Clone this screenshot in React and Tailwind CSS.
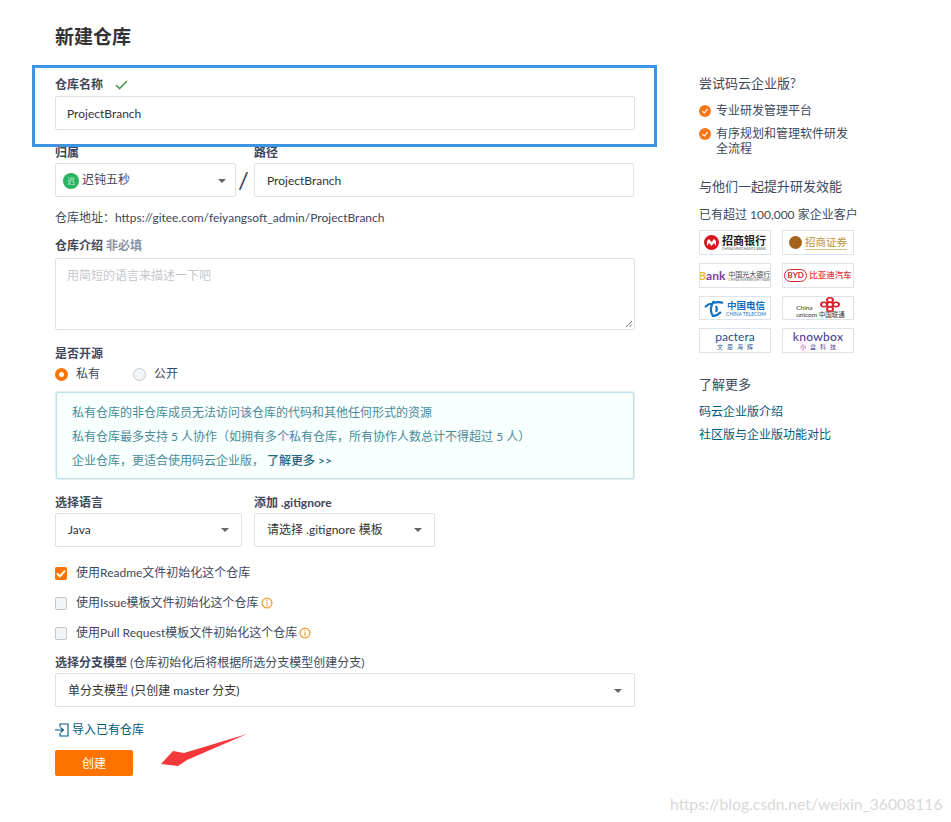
import React from 'react';

const FONT = 'font-["Lato","Noto_Sans_CJK_SC",sans-serif]';

// 下拉箭头
const Caret = () => (
    <span className="w-0 h-0 border-x-[4px] border-x-transparent border-t-[4px] border-t-[#666]" />
);

const Label = ({ children, className = '' }) => (
    <div className={`text-[12px] leading-[16px] font-bold text-[#40485b] ${className}`}>{children}</div>
);

const Select = ({ className = '', children }) => (
    <div className={`h-[34px] bg-white border border-[#dfe1e8] rounded-[2px] flex items-center justify-between text-[12px] text-[#333] ${className}`}>
        <span className="flex items-center">{children}</span>
        <Caret />
    </div>
);

const InfoIcon = () => (
    <svg width="12" height="12" viewBox="0 0 12 12" className="ml-[2px]">
        <circle cx="6" cy="6" r="4.8" fill="none" stroke="#f3a54c" strokeWidth="1.5" />
        <path d="M6 3v1.2M6 5.2V9" stroke="#f3a54c" strokeWidth="1.3" />
    </svg>
);

const CheckRow = ({ checked, info, children, className = '' }) => (
    <div className={`h-[16px] flex items-center text-[12px] text-[#40485b] ${className}`}>
        {checked ? (
            <span className="w-[12px] h-[13px] bg-[#fe7300] rounded-[2px] flex items-center justify-center">
                <svg width="10" height="9" viewBox="0 0 10 9">
                    <path d="M1 4.5l2.8 2.8L9 1.6" fill="none" stroke="#fff" strokeWidth="2" />
                </svg>
            </span>
        ) : (
            <span className="w-[12px] h-[13px] bg-[#f3f4f6] border border-[#c4c6cc] rounded-[2px]" />
        )}
        <span className="ml-[9px]">{children}</span>
        {info && <InfoIcon />}
    </div>
);

const OrangeCheck = () => (
    <svg width="12" height="12" viewBox="0 0 12 12" className="shrink-0 mt-[2px]">
        <circle cx="6" cy="6" r="6" fill="#f3791c" />
        <path d="M3.4 6.2l1.8 1.8 3.4-3.8" fill="none" stroke="#fff" strokeWidth="1.1" />
    </svg>
);

const LogoBox = ({ children }) => (
    <div className="h-full border border-[#dce3ea] bg-white flex items-center justify-center overflow-hidden whitespace-nowrap">
        {children}
    </div>
);

const Logos = () => (
    <div className="mt-[7px] grid grid-cols-[72px_72px] grid-rows-[25px_25px_24px_25px] gap-x-[11px] gap-y-[8px]">
        <LogoBox>
            <svg width="15" height="15" viewBox="0 0 15 15">
                <circle cx="7.5" cy="7.5" r="7.5" fill="#d8161f" />
                <path d="M3 11V6l2-2 2.500 3 2.500-3 2 2v5l-2-3-2.500 3-2.500-3z" fill="#fff" />
            </svg>
            <span className="ml-[3px] flex flex-col">
                <span className="text-[11px] leading-[12px] font-bold text-[#222]">招商银行</span>
                <span className="text-[3.500px] leading-[4px] text-[#666]">CHINA MERCHANTS BANK</span>
            </span>
        </LogoBox>
        <LogoBox>
            <span className="w-[13px] h-[13px] rounded-full bg-[#a5641c]" />
            <span className="ml-[3px] text-[10.500px] leading-[13px] font-medium text-[#c9a25a] border-b border-[#d8bd85]">招商证券</span>
        </LogoBox>
        <LogoBox>
            <span className="text-[12px] leading-none font-bold text-[#e9b73c]">B</span>
            <span className="text-[12px] leading-none font-bold text-[#7d3f98]">ank</span>
            <span className="ml-[3px] flex flex-col">
                <span className="text-[7px] leading-[8px] text-[#444]">中国光大银行</span>
                <span className="text-[3.500px] leading-[4px] text-[#777]">CHINA EVERBRIGHT BANK</span>
            </span>
        </LogoBox>
        <LogoBox>
            <span className="w-[23px] h-[13px] border border-[#d8232a] rounded-full text-[8px] leading-[11px] text-center font-bold text-[#d8232a]">BYD</span>
            <span className="ml-[2px] text-[8.500px] leading-none font-medium text-[#e0353b]">比亚迪汽车</span>
        </LogoBox>
        <LogoBox>
            <svg width="20" height="17" viewBox="0 0 20 17">
                <path d="M1 7c4-4 13-6 18-4M10 1C6 6 6 12 9 16c3 0 6-2 8-4M12 6c1 2 1 4 0 6" fill="none" stroke="#0d6fc0" strokeWidth="2.200" />
            </svg>
            <span className="ml-[2px] flex flex-col items-center">
                <span className="text-[9.500px] leading-[11px] font-bold text-[#0d6fc0]">中国电信</span>
                <span className="text-[5px] leading-[6px] text-[#0d6fc0]">CHINA TELECOM</span>
            </span>
        </LogoBox>
        <LogoBox>
            <span className="self-end mb-[1px] flex flex-col text-[6.500px] leading-[7px] text-[#333]">
                <span>China</span>
                <span>unicom 中国联通</span>
            </span>
            <svg width="20" height="15" viewBox="0 0 20 20" preserveAspectRatio="none" className="self-start ml-[-25px]">
                <g fill="none" stroke="#d8232a" strokeWidth="2">
                    <circle cx="10" cy="4" r="3" />
                    <circle cx="4" cy="10" r="3" />
                    <circle cx="16" cy="10" r="3" />
                    <circle cx="10" cy="16" r="3" />
                    <circle cx="10" cy="10" r="3" />
                </g>
            </svg>
        </LogoBox>
        <LogoBox>
            <span className="flex flex-col items-center">
                <span className="text-[12px] leading-[12px] text-[#1d4f8c]">pactera</span>
                <span className="text-[6px] leading-[8px] tracking-[4px] ml-[4px] text-[#1d4f8c]">文思海辉</span>
            </span>
        </LogoBox>
        <LogoBox>
            <span className="flex flex-col items-center">
                <span className="text-[12px] leading-[12px] font-medium text-[#4b3f9e] tracking-[0.3px]">knowbox</span>
                <span className="text-[6px] leading-[8px] tracking-[4px] ml-[4px] text-[#4b3f9e]">小盒科技</span>
            </span>
        </LogoBox>
    </div>
);

const App = () => {
    return (
        <div className={`relative w-[951px] h-[822px] bg-white overflow-hidden flex items-start ${FONT}`}>
            {/* 表单 */}
            <div className="ml-[55px] w-[580px] shrink-0">
                <h1 className="mt-[25px] text-[19px] leading-[24px] font-bold text-[#333]">新建仓库</h1>

                <div className="flex items-center h-[16px] mt-[28px]">
                    <Label>仓库名称</Label>
                    <svg width="13" height="10" viewBox="0 0 13 10" className="ml-[12px]">
                        <path d="M1 5l3.500 3.500L12 1" fill="none" stroke="#4a9d50" strokeWidth="1.6" />
                    </svg>
                </div>
                <div className="mt-[3px] h-[34px] pt-[2px] border border-[#dfe1e8] rounded-[2px] pl-[11px] flex items-center text-[12px] text-[#333]">
                    ProjectBranch
                </div>

                <div className="mt-[15px] flex">
                    <div>
                        <Label>归属</Label>
                        <Select className="w-[181px] mt-[2px] pt-[2px] pl-[7px] pr-[9px]">
                            <span className="w-[16px] h-[16px] rounded-full bg-[#27b35f] text-[8px] text-[#cfeedd] flex items-center justify-center">迟</span>
                            <span className="ml-[3px] mb-[2px] text-[#40485b]">迟钝五秒</span>
                        </Select>
                    </div>
                    <div className="w-[18px] pl-[2px] self-end mb-[1px] text-left text-[24px] leading-[32px] text-[#40485b]">/</div>
                    <div>
                        <Label>路径</Label>
                        <div className="w-[380px] mt-[2px] h-[34px] pt-[2px] border border-[#dfe1e8] rounded-[2px] pl-[12px] flex items-center text-[12px] text-[#333]">
                            ProjectBranch
                        </div>
                    </div>
                </div>

                <div className="mt-[13px] h-[16px] text-[12px] leading-[16px] text-[#40485b] whitespace-nowrap">
                    {'仓库地址\uFF1Ahttps://gitee.com/feiyangsoft_admin/ProjectBranch'}
                </div>

                <Label className="mt-[12px]">
                    仓库介绍 <span className="text-[#8c92a4]">非必填</span>
                </Label>
                <div className="mt-[4px] h-[72px] border border-[#dfe1e8] rounded-[2px] pl-[11px] pt-[9px] text-[12px] leading-[16px] text-[#c4c6cc] relative">
                    用简短的语言来描述一下吧
                    <svg width="8" height="8" viewBox="0 0 8 8" className="absolute right-[1px] bottom-[1px]">
                        <path d="M1 7l6-6M4.500 7L7 4.500" stroke="#777" strokeWidth="1" />
                    </svg>
                </div>

                <Label className="mt-[16px]">是否开源</Label>
                <div className="mt-[4px] h-[16px] flex items-center text-[12px] text-[#40485b]">
                    <span className="w-[13px] h-[13px] rounded-full border-[4px] border-[#fe7300] bg-white" />
                    <span className="ml-[8px]">私有</span>
                    <span className="ml-[33px] w-[13px] h-[13px] rounded-full border border-[#c4c6cc] bg-[#f3f4f6]" />
                    <span className="ml-[8px]">公开</span>
                </div>

                {/* 提示框 */}
                <div className="mt-[10px] ml-[1px] w-[578px] h-[87px] bg-[#f8ffff] border border-[#bfdfe6] rounded-[2px] pl-[15px] pt-[8px] text-[12px] leading-[24px] text-[#4a8a98] shadow-[0_0_0_1px_#e4eff2]">
                    <div>私有仓库的非仓库成员无法访问该仓库的代码和其他任何形式的资源</div>
                    <div>{'私有仓库最多支持 5 人协作\uFF08如拥有多个私有仓库\uFF0C所有协作人数总计不得超过 5 人\uFF09'}</div>
                    <div>
                        {'企业仓库\uFF0C更适合使用码云企业版\uFF0C '}<span className="font-medium text-[#1f6a80]">了解更多 &gt;&gt;</span>
                    </div>
                </div>

                <div className="mt-[16px] flex">
                    <div>
                        <Label>选择语言</Label>
                        <Select className="w-[187px] mt-[2px] pl-[12px] pr-[12px]">Java</Select>
                    </div>
                    <div className="ml-[12px]">
                        <Label>添加 .gitignore</Label>
                        <Select className="w-[181px] mt-[2px] pl-[12px] pr-[12px]">请选择 .gitignore 模板</Select>
                    </div>
                </div>

                <CheckRow checked className="mt-[18px]">使用Readme文件初始化这个仓库</CheckRow>
                <CheckRow info className="mt-[14px]">使用Issue模板文件初始化这个仓库</CheckRow>
                <CheckRow info className="mt-[14px]">使用Pull Request模板文件初始化这个仓库</CheckRow>

                <div className="mt-[14px] h-[16px] text-[12px] leading-[16px] text-[#40485b] whitespace-nowrap">
                    <span className="font-bold">选择分支模型</span> (仓库初始化后将根据所选分支模型创建分支)
                </div>
                <Select className="mt-[2px] pt-[2px] pl-[12px] pr-[12px]">单分支模型 (只创建 master 分支)</Select>

                <div className="mt-[15px] h-[16px] flex items-center text-[12px] text-[#005980]">
                    <svg width="14" height="14" viewBox="0 0 14 14" className="mr-[3px]">
                        <path d="M5 4V1h8v12H5v-3M0 7h8M5.500 4.500L8.500 7l-3 2.500" fill="none" stroke="#005980" strokeWidth="1.100" />
                    </svg>
                    导入已有仓库
                </div>

                <button className="mt-[12px] w-[78px] h-[26px] pt-[2px] bg-[#fe7300] rounded-[2px] text-[12px] text-white">创建</button>
            </div>

            {/* 右侧栏 */}
            <div className="ml-[64px] w-[170px] shrink-0 pt-[75px] text-[#40485b]">
                <div className="text-[13px] leading-[17px]">尝试码云企业版?</div>
                <div className="mt-[11px] flex gap-[5px] text-[12px] leading-[16px]">
                    <OrangeCheck />
                    <span>专业研发管理平台</span>
                </div>
                <div className="mt-[7px] flex gap-[5px] text-[12px] leading-[15px] w-[155px]">
                    <OrangeCheck />
                    <span>有序规划和管理软件研发全流程</span>
                </div>
                <div className="mt-[22px] text-[13px] leading-[17px]">与他们一起提升研发效能</div>
                <div className="mt-[12px] text-[12px] leading-[16px]">已有超过 100,000 家企业客户</div>
                <Logos />
                <div className="mt-[23px] text-[13px] leading-[17px]">了解更多</div>
                <div className="mt-[11px] text-[12px] leading-[16px] text-[#005980]">码云企业版介绍</div>
                <div className="mt-[7px] text-[12px] leading-[16px] text-[#005980]">社区版与企业版功能对比</div>
            </div>

            {/* 截图标注 */}
            <div className="absolute left-[32px] top-[65px] w-[625px] h-[82px] border-[3px] border-[#3c94e4]" />
            <svg width="90" height="36" viewBox="0 0 90 36" className="absolute left-[159px] top-[733px]">
                <path d="M88 1L25 20l-11-2L2 31l17 2 9-6z" fill="#f5383b" />
            </svg>
            <div className="absolute left-[670px] top-[795px] text-[15.700px] leading-[18px] text-[#d8d8d8] whitespace-nowrap">
                https://blog.csdn.net/weixin_36008116
            </div>
        </div>
    );
};

export default App;
